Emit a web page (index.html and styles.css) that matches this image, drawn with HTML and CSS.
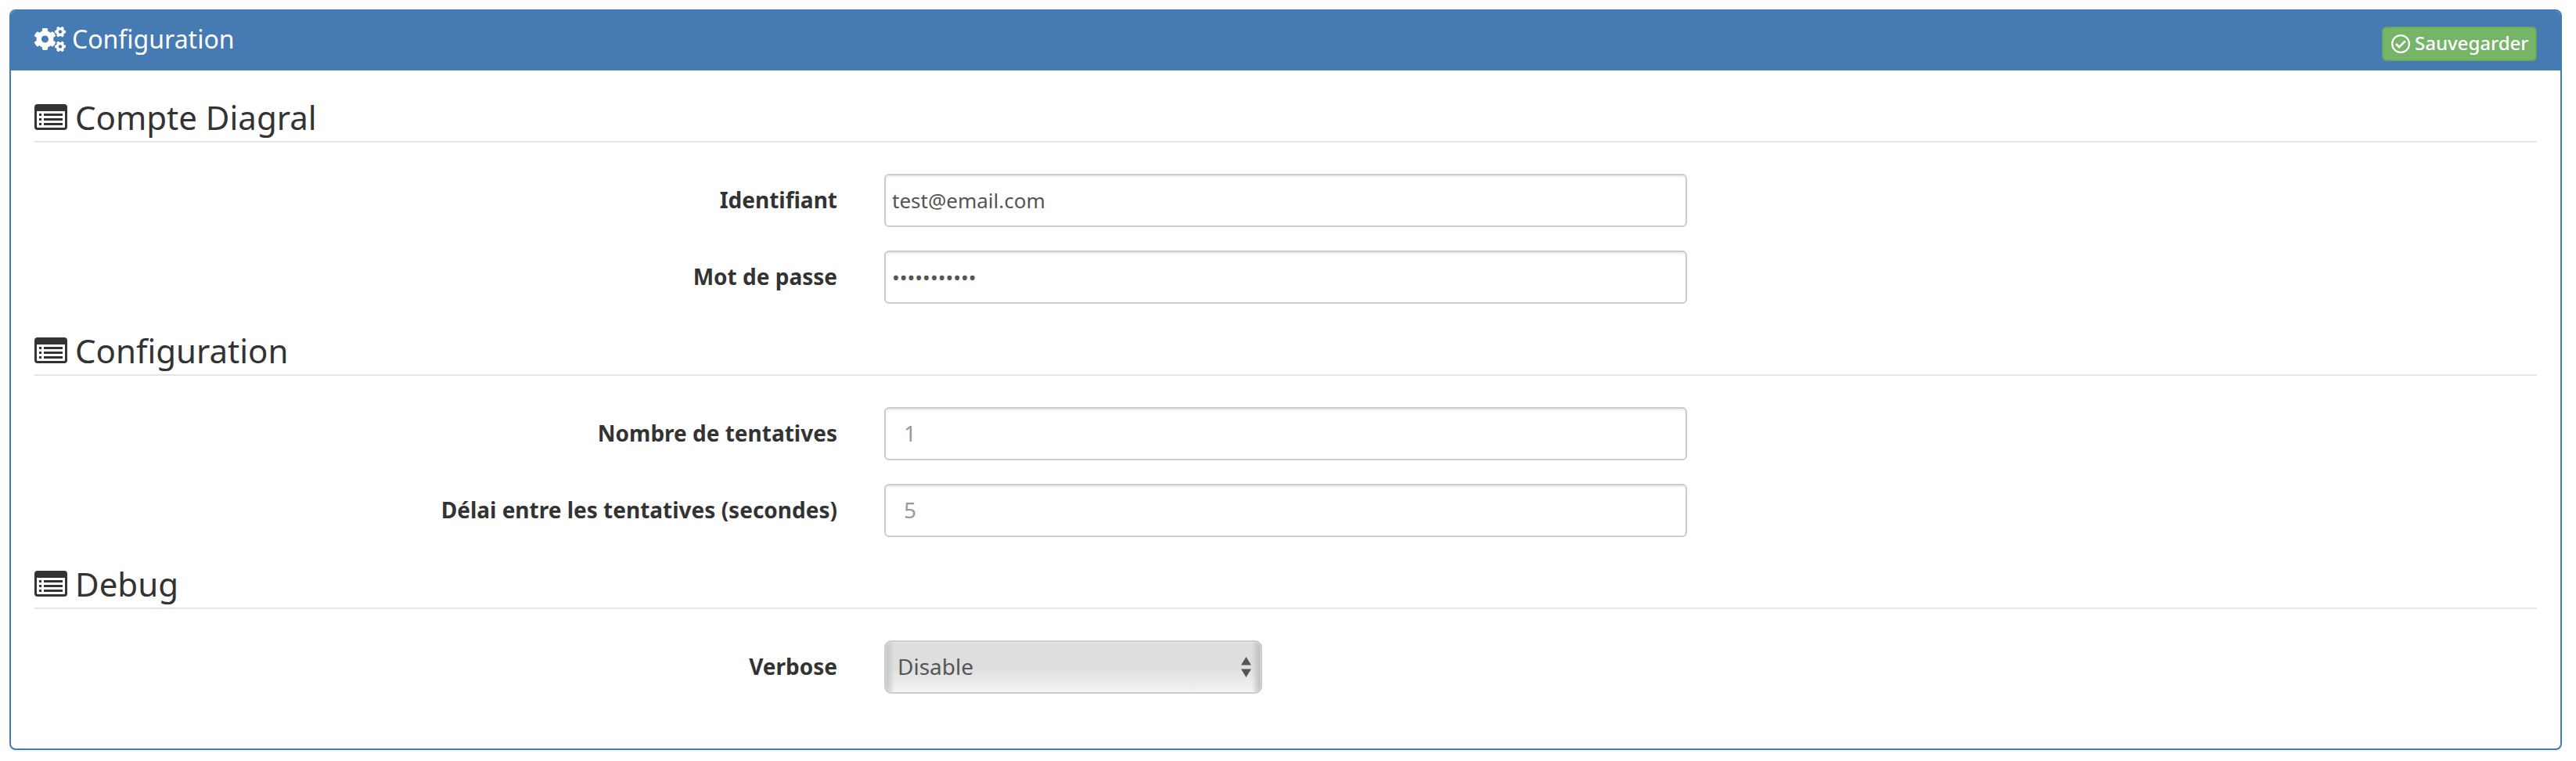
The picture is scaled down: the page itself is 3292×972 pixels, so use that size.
FILE: index.html
```html
<!DOCTYPE html>
<html lang="fr">
<head>
<meta charset="utf-8">
<title>Configuration</title>
<link rel="stylesheet" href="styles.css">
</head>
<body>
<svg class="defs" width="0" height="0">
  <symbol id="list" viewBox="0 0 42 33">
    <path fill-rule="evenodd" d="M4 0H38a4 4 0 0 1 4 4V29a4 4 0 0 1-4 4H4a4 4 0 0 1-4-4V4a4 4 0 0 1 4-4ZM3 9V29a1 1 0 0 0 1 1H38a1 1 0 0 0 1-1V9Z"/>
    <path d="M6 12h3v3h-3zM6 18h3v3h-3zM6 24h3v3h-3zM12 12h24v3h-24zM12 18h24v3h-24zM12 24h24v3h-24z"/>
  </symbol>
</svg>
<section class="panel">
  <header class="panel-heading">
    <h3 class="panel-title">
      <svg class="icon-cogs" viewBox="0 0 640 512" fill="#fff">
        <path id="small-cog" d="M512.1 191l-8.200 14.300c-3 5.300-9.400 7.500-15.100 5.400-11.800-4.400-22.600-10.700-32.100-18.600-4.600-3.800-5.800-10.500-2.800-15.700l8.200-14.300c-6.900-8-12.300-17.300-15.900-27.400h-16.500c-6 0-11.200-4.300-12.200-10.300-2-12-2.100-24.600 0-37.100 1-6 6.200-10.400 12.200-10.400h16.500c3.600-10.100 9-19.400 15.900-27.400l-8.200-14.300c-3-5.200-1.900-11.900 2.800-15.700 9.500-7.900 20.400-14.200 32.100-18.600 5.700-2.100 12.100.1 15.100 5.400l8.200 14.300c10.500-1.900 21.200-1.900 31.700 0L552 6.300c3-5.300 9.400-7.500 15.100-5.400 11.800 4.400 22.600 10.700 32.100 18.600 4.600 3.800 5.800 10.500 2.800 15.700l-8.200 14.300c6.900 8 12.300 17.300 15.900 27.400h16.500c6 0 11.200 4.300 12.200 10.300 2 12 2.100 24.600 0 37.100-1 6-6.200 10.400-12.200 10.400h-16.500c-3.600 10.100-9 19.400-15.900 27.400l8.200 14.300c3 5.200 1.900 11.900-2.800 15.700-9.500 7.900-20.400 14.200-32.100 18.600-5.700 2.100-12.100-.1-15.100-5.400l-8.200-14.300c-10.400 1.900-21.200 1.900-31.700 0zm-10.500-58.800c38.500 29.600 82.400-14.300 52.800-52.800-38.500-29.700-82.400 14.300-52.800 52.800z"/>
        <use href="#small-cog" y="301"/>
        <path d="M386.300 286.100l33.700 16.800c10.100 5.800 14.500 18.100 10.500 29.100-8.900 24.200-26.400 46.400-42.600 65.800-7.400 8.900-20.200 11.100-30.300 5.300l-29.100-16.800c-16 13.700-34.600 24.600-54.900 31.700v33.600c0 11.600-8.300 21.600-19.700 23.600-24.600 4.200-50.400 4.400-75.900 0-11.500-2-20-11.900-20-23.600V418c-20.300-7.200-38.900-18-54.900-31.700L74 403c-10 5.800-22.900 3.600-30.300-5.300-16.200-19.400-33.300-41.600-42.200-65.700-4-10.900.4-23.200 10.500-29.100l33.300-16.800c-3.900-20.900-3.900-42.400 0-63.400L12 205.800c-10.100-5.800-14.600-18.100-10.500-29 8.900-24.200 26-46.400 42.200-65.800 7.400-8.900 20.200-11.100 30.300-5.300l29.100 16.800c16-13.700 34.600-24.600 54.900-31.700V57.100c0-11.500 8.200-21.500 19.600-23.500 24.600-4.200 50.500-4.400 76-.1 11.500 2 20 11.900 20 23.600v33.600c20.300 7.200 38.900 18 54.900 31.700l29.100-16.800c10-5.800 22.900-3.600 30.300 5.300 16.200 19.400 33.200 41.600 42.100 65.800 4 10.900.1 23.200-10 29.100l-33.700 16.800c3.900 21 3.900 42.500 0 63.500zm-117.600 21.100c59.200-77-28.700-164.900-105.700-105.700-59.200 77 28.700 164.900 105.700 105.700z"/>
      </svg>
      <span>Configuration</span>
    </h3>
    <button class="save" type="button">
      <svg class="icon-check" viewBox="0 0 24 24" fill="none" stroke="#fff"><circle cx="12" cy="12" r="10.900" stroke-width="2.200"/><path d="M6 12l4 4.200 7.800-7.800" stroke-width="2.600"/></svg>
      <span>Sauvegarder</span>
    </button>
  </header>
  <div class="panel-body">
    <h2 class="legend"><svg class="icon-list"><use href="#list"/></svg><span>Compte Diagral</span></h2>
    <div class="row"><span class="label">Identifiant</span><div class="field field-tight">test@email.com</div></div>
    <div class="row"><span class="label">Mot de passe</span><div class="field field-tight">•••••••••••</div></div>
    <h2 class="legend"><svg class="icon-list"><use href="#list"/></svg><span>Configuration</span></h2>
    <div class="row"><span class="label">Nombre de tentatives</span><div class="field field-hint">1</div></div>
    <div class="row"><span class="label">Délai entre les tentatives (secondes)</span><div class="field field-hint">5</div></div>
    <h2 class="legend"><svg class="icon-list"><use href="#list"/></svg><span>Debug</span></h2>
    <div class="row"><span class="label">Verbose</span><div class="field field-select"><span>Disable</span><svg class="arrows" viewBox="0 0 13 26"><path d="M0 10.500L6.500 0 13 10.500zM0 15.500H13L6.500 26z"/></svg></div></div>
  </div>
</section>
</body>
</html>
```
FILE: styles.css
```css
* { box-sizing: border-box; }
body {
  margin: 0;
  padding: 12px 18px 14px 12px;
  background: #fff;
  color: #333;
  font-family: "Noto Sans", "Open Sans", sans-serif;
}
.defs { position: absolute; }
.panel {
  height: 946px;
  border: 2px solid #467ab3;
  border-radius: 8px;
  background: #fff;
  box-shadow: 0 2px 2px rgba(0, 0, 0, .05);
}
.panel-heading {
  display: flex;
  justify-content: space-between;
  height: 76px;
  padding: 20px 30px 0;
  border-radius: 6px 6px 0 0;
  background: #467ab3;
  color: #fff;
}
.panel-title {
  display: flex;
  gap: 8px;
  height: 32px;
  margin: 0;
  font-size: 32px;
  font-weight: 400;
  line-height: 32px;
}
.icon-cogs { width: 40px; height: 32px; }
.save {
  display: flex;
  align-items: center;
  gap: 6px;
  width: 198px;
  height: 44px;
  padding: 0 0 2px 10px;
  border: 2px solid #67ab58;
  border-radius: 6px;
  background: #76b568;
  color: #fff;
  font-family: inherit;
  font-size: 24px;
  font-weight: 500;
  line-height: 36px;
}
.icon-check { width: 24px; height: 24px; margin-top: 1px; }
.panel-body { padding: 30px; }
.legend {
  display: flex;
  gap: 10px;
  height: 62px;
  margin: 0 0 40px;
  border-bottom: 2px solid #e5e5e5;
  font-size: 42px;
  font-weight: 400;
  line-height: 60px;
}
.icon-list { width: 42px; height: 33px; margin-top: 13px; fill: #333; }
.row {
  display: grid;
  grid-template-columns: 1026px 1026px;
  column-gap: 60px;
  height: 68px;
  margin-bottom: 30px;
}
.label {
  text-align: right;
  font-size: 28px;
  font-weight: 700;
  line-height: 66px;
}
.field {
  height: 68px;
  border: 2px solid #ccc;
  border-radius: 6px;
  background: #fff;
  box-shadow: inset 0 2px 2px rgba(0, 0, 0, .075);
  color: #555;
  line-height: 64px;
}
.field-tight { padding-left: 8px; font-size: 26px; }
.field-hint { padding-left: 23px; color: #999; font-size: 28px; line-height: 62px; }
.field-select {
  display: flex;
  align-items: center;
  justify-content: space-between;
  width: 483px;
  padding: 0 12px 0 15px;
  border-radius: 9px;
  background:
    linear-gradient(90deg, #c4c4c4, rgba(196, 196, 196, 0) 11px, rgba(188, 188, 188, 0) calc(100% - 11px), #bcbcbc),
    linear-gradient(#dedede 0%, #dedede 50%, #f3f3f3 100%);
  box-shadow: inset 0 0 0 1px rgba(255, 255, 255, .35);
  font-size: 28px;
  line-height: 62px;
}
.field-select span { margin-top: -2px; }
.arrows { width: 13px; height: 26px; fill: #555; }
```
